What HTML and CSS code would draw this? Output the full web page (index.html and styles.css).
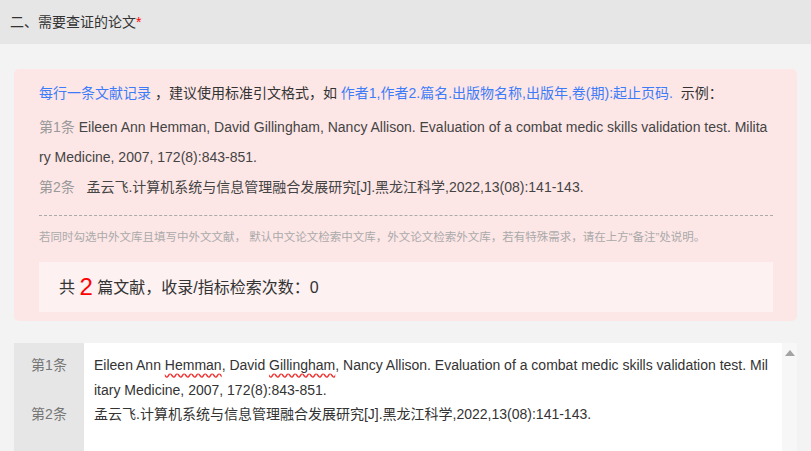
FILE: index.html
```html
<!DOCTYPE html>
<html lang="zh-CN">
<head>
  <meta charset="UTF-8">
  <meta name="viewport" content="width=device-width, initial-scale=1.0" />
  <title>需要查证的论文</title>
  <link rel="stylesheet" href="styles.css">
</head>
<body>

  <!-- section title -->
  <div class="section-title">二、需要查证的论文<span class="required">*</span></div>

  <div class="section-body">

    <!-- notice box -->
    <div class="notice">
      <p class="tip">
        <span class="link">每行一条文献记录</span> ，建议使用标准引文格式，如
        <span class="link">作者1,作者2.篇名.出版物名称,出版年,卷(期):起止页码.</span>&nbsp;&nbsp;示例：
      </p>
      <div class="examples">
        <span class="no">第1条</span>&nbsp;Eileen Ann Hemman, David Gillingham, Nancy Allison. Evaluation of a combat medic skills validation test. Military Medicine, 2007, 172(8):843-851.<br>
        <span class="no">第2条</span>&nbsp;&nbsp;&nbsp;孟云飞.计算机系统与信息管理融合发展研究[J].黑龙江科学,2022,13(08):141-143.
      </div>
      <p class="hint">若同时勾选中外文库且填写中外文文献， 默认中文论文检索中文库，外文论文检索外文库，若有特殊需求，请在上方“备注”处说明。</p>
      <div class="count">
        共 <span class="num">2</span> 篇文献，收录/指标检索次数：0
      </div>
    </div>

    <!-- editor -->
    <div class="editor">
      <div class="editor-lines">
        <div class="line-no">第1条</div>
        <div class="line-text">Eileen Ann <span class="typo">Hemman</span>, David <span class="typo">Gillingham</span>, Nancy Allison. Evaluation of a combat medic skills validation test. Military Medicine, 2007, 172(8):843-851.</div>
        <div class="line-no">第2条</div>
        <div class="line-text">孟云飞.计算机系统与信息管理融合发展研究[J].黑龙江科学,2022,13(08):141-143.</div>
      </div>
      <div class="scrollbar">
        <span class="arrow-up"></span>
      </div>
    </div>

  </div>

</body>
</html>
```

FILE: styles.css
```css
* {
  box-sizing: border-box;
}

body {
  margin: 0;
  background: #f3f3f3;
  font-family: "Liberation Sans", "Noto Sans CJK SC", sans-serif;
  font-size: 14px;
  color: #333;
}

.section-title {
  height: 44px;
  line-height: 44px;
  padding-left: 10px;
  background: #e6e6e6;
  color: #333;
  font-size: 14px;
}

.required {
  color: #f00;
}

.section-body {
  padding: 25px 14px 0;
}

.notice {
  background: #fde6e6;
  border-radius: 5px;
  padding: 12px 24px 9px 25px;
}

.tip {
  margin: 0 0 7px;
  line-height: 24px;
}

.link {
  color: #3d7cf9;
}

.examples {
  line-height: 30px;
  word-break: break-all;
  color: #444;
  padding-right: 2px;
  padding-bottom: 13px;
  border-bottom: 1px dashed #aaa;
}

.examples .no {
  color: #999;
}

.hint {
  margin: 11px 0 15px;
  line-height: 20px;
  font-size: 11.5px;
  color: #aaa;
}

.count {
  background: #fdf1f1;
  height: 50px;
  line-height: 50px;
  padding-left: 20px;
  font-size: 16px;
  color: #333;
}

.count .num {
  color: #f00;
  font-size: 24px;
  vertical-align: -2px;
}

.editor {
  margin-top: 22px;
  display: flex;
  height: 150px;
  background: #fff;
}

.editor-lines {
  flex: 1;
  display: grid;
  grid-template-columns: 70px 1fr;
  align-content: start;
  padding: 10px 0;
  line-height: 24.5px;
  font-size: 14px;
  background: linear-gradient(to right, #e6e6e6 70px, #fff 70px);
}

.line-no {
  text-align: center;
  color: #777;
}

.line-text {
  padding: 0 14px 0 10px;
  color: #333;
  word-break: break-all;
}

.typo {
  text-decoration: underline wavy #e33;
  text-decoration-skip-ink: none;
  text-underline-offset: 3px;
}

.scrollbar {
  width: 15px;
  background: #f7f7f7;
  display: flex;
  justify-content: center;
  padding-top: 7px;
}

.arrow-up {
  width: 0;
  height: 0;
  border-left: 5px solid transparent;
  border-right: 5px solid transparent;
  border-bottom: 6px solid #a3a3a3;
}
```
